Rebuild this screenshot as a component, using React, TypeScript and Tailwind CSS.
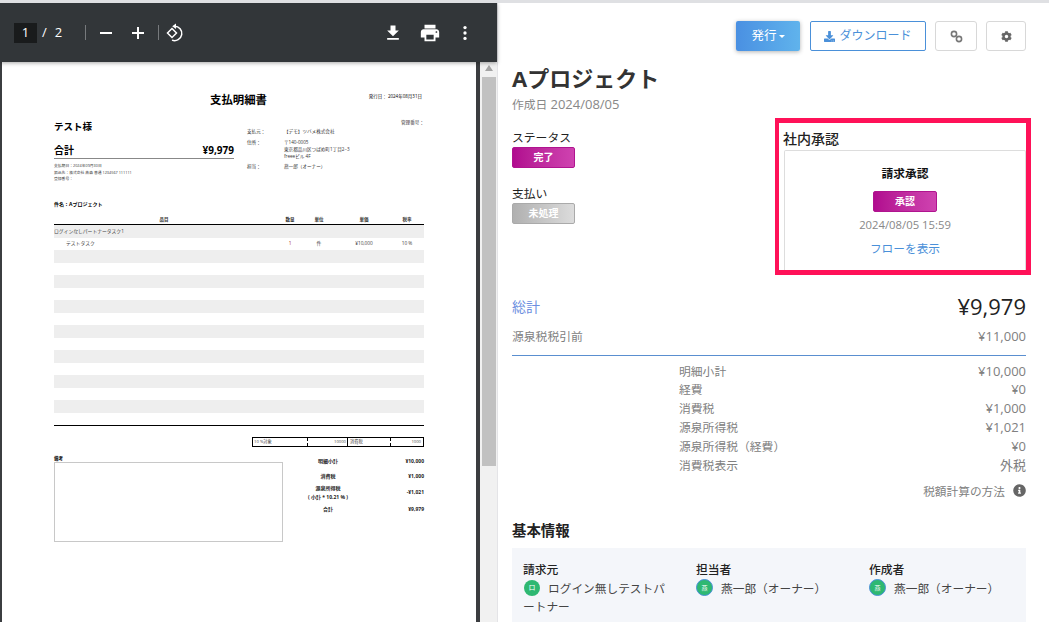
import React from "react";
import { FaCog, FaDownload, FaInfoCircle } from "react-icons/fa";

const stripes = [true, false, true, false, true, false, true, false, true, false, true, false, true];

function Money({ label, value }: { label: string; value: string }) {
  return (
    <div className="flex h-[18.8px] items-center justify-between pl-[167px] text-[11.8px] text-[#808080]">
      <span>{label}</span>
      <span className="text-[13px]">{value}</span>
    </div>
  );
}

function Person({ title, name }: { title: string; name: string }) {
  return (
    <div className="w-[173px] shrink-0">
      <div className="text-[11.8px] leading-[18px] font-medium text-[#222]">{title}</div>
      <div className="mt-[1px] flex items-center gap-[8px] text-[11.7px] leading-[18px] text-[#444]">
        <span className="flex h-[17px] w-[17px] shrink-0 items-center justify-center rounded-full border border-[#4a90d9] bg-[#2eb872] text-[6px] text-white">燕</span>
        <span>{name}</span>
      </div>
    </div>
  );
}

export default function App() {
  return (
    <div
      className="flex h-[622px] w-[1049px] overflow-hidden border-t-[3px] border-[#dfe0e3] bg-white"
      style={{ fontFamily: '"Open Sans", "Noto Sans CJK JP", sans-serif' }}
    >
      <div className="flex w-[497px] shrink-0 flex-col bg-[#3b3d40]">
        <div className="z-10 flex h-[59px] shrink-0 items-center bg-[#323639] pl-[14px] pr-[22px] text-white shadow-[0_1px_4px_rgba(0,0,0,0.35)]">
          <span className="flex h-[20px] w-[23px] items-center justify-center bg-[#191b1c] text-[13px]">1</span>
          <span className="ml-[5px] text-[13px]">/</span>
          <span className="ml-[8px] text-[13px]">2</span>
          <span className="ml-[23px] h-[15px] w-px bg-[#777a7d]" />
          <svg className="ml-[14px] h-[12px] w-[12px]" viewBox="0 0 12 12" fill="white"><rect y="5" width="12" height="2" /></svg>
          <svg className="ml-[20px] h-[12px] w-[12px]" viewBox="0 0 12 12" fill="white"><path d="M5 0h2v5h5v2H7v5H5V7H0V5h5z" /></svg>
          <span className="ml-[14px] h-[15px] w-px bg-[#777a7d]" />
          <svg className="ml-[6px] h-[20px] w-[20px]" viewBox="0 0 20 20" fill="none" stroke="white" strokeWidth="1.5">
            <path d="M9.5 3.2a7.2 7.2 0 1 1-2.5 13.9" />
            <path d="M11 .4 7.2 3.2 11 6z" fill="white" stroke="none" />
            <path d="M7 5.5 11.5 10 7 14.5 2.5 10z" />
          </svg>
          <svg className="ml-auto h-[20px] w-[20px]" viewBox="0 0 24 24" fill="white"><path d="M19 9h-4V3H9v6H5l7 7 7-7zM5 18v2h14v-2H5z" /></svg>
          <svg className="ml-[16px] h-[22px] w-[22px]" viewBox="0 0 24 24" fill="white"><path d="M19 8H5c-1.66 0-3 1.34-3 3v6h4v4h12v-4h4v-6c0-1.66-1.34-3-3-3zm-3 11H8v-5h8v5zm3-7c-.55 0-1-.45-1-1s.45-1 1-1 1 .45 1 1-.45 1-1 1zm-1-9H6v4h12V3z" /></svg>
          <svg className="ml-[14px] h-[20px] w-[20px]" viewBox="0 0 24 24" fill="white"><circle cx="12" cy="5.5" r="2" /><circle cx="12" cy="12" r="2" /><circle cx="12" cy="18.5" r="2" /></svg>
        </div>
        <div className="flex min-h-0 flex-1">
          <div className="ml-[2px] w-[474px] shrink-0 bg-white pl-[52px] pr-[52px] text-black">
            <div className="relative h-[38px]">
              <div className="absolute left-[156px] top-[30px] text-[11.4px] leading-[15px] font-bold">支払明細書</div>
              <div className="absolute right-[2px] top-[31px] text-[4.5px] leading-[7px]">発行日： 2024年08月31日</div>
            </div>
            <div className="flex h-[100px]">
              <div className="w-[180px] pt-[20px]">
                <div className="text-[9.5px] leading-[13px] font-bold">テスト様</div>
                <div className="mt-[10px] flex items-center justify-between border-b border-[#888] pb-[1px] text-[10px] leading-[14px] font-bold">
                  <span>合計</span>
                  <span>¥9,979</span>
                </div>
                <div className="mt-[4px] text-[3.8px] leading-[6.5px] text-[#333]">
                  <div>支払期日：2024年09月30日</div>
                  <div>振込先：株式会社 燕森 普通 1234567 111111</div>
                  <div>登録番号：</div>
                </div>
              </div>
              <div className="relative ml-[13px] flex-1 pt-[28px] text-[4.6px] leading-[7px] text-[#333]">
                <div className="absolute right-0 top-[19px]">管理番号：</div>
                <div className="flex h-[11px]"><span className="w-[37px]">支払元：</span><span>【デモ】ツバメ株式会社</span></div>
                <div className="flex h-[24px]"><span className="w-[37px]">住所：</span><span>〒140-0005<br />東京都品川区つばめ町1丁目2−3<br />freeeビル 4F</span></div>
                <div className="flex"><span className="w-[37px]">担当：</span><span>燕一郎（オーナー）</span></div>
              </div>
            </div>
            <div className="text-[5px] leading-[8px] font-bold">件名：Aプロジェクト</div>
            <div className="mt-[7px] flex h-[10px] items-center border-b border-black text-[4.5px] font-bold leading-[7px] text-[#333]">
              <span className="w-[220px] text-center">品目</span>
              <span className="w-[32px] text-center">数量</span>
              <span className="w-[26px] text-center">単位</span>
              <span className="w-[64px] text-center">単価</span>
              <span className="w-[22px] text-center">税率</span>
            </div>
            <div className="flex h-[12.5px] items-center bg-[#eeeeee] text-[4.8px] text-[#444]">ログインなしパートナータスク1</div>
            <div className="flex h-[12.5px] items-center text-[4.8px] text-[#444]">
              <span className="w-[220px] pl-[12px]">テストタスク</span>
              <span className="w-[32px] text-center text-[#a33]">1</span>
              <span className="w-[26px] text-center">件</span>
              <span className="w-[64px] text-center">¥10,000</span>
              <span className="w-[22px] text-center">10 %</span>
            </div>
            {stripes.map((on, i) => (
              <div key={i} className={on ? "h-[12.5px] bg-[#eeeeee]" : "h-[12.5px]"} />
            ))}
            <div className="mt-[12.5px] border-t border-black" />
            <div className="ml-[198px] mt-[11px] flex h-[10px] border border-black text-[4.2px] text-[#444]">
              <span className="flex w-[55px] items-center border-r border-dashed border-black pl-[1px]">10 %対象</span>
              <span className="flex w-[40px] items-center justify-end border-r border-black pr-[1px]">10000</span>
              <span className="flex w-[43px] items-center border-r border-dashed border-black pl-[2px]">消費税</span>
              <span className="flex flex-1 items-center justify-end pr-[2px]">1000</span>
            </div>
            <div className="mt-[8px] flex">
              <div className="w-[229px]">
                <div className="text-[4.5px] font-bold leading-[7px]">備考</div>
                <div className="h-[80px] border border-[#c8c8c8]" />
              </div>
              <div className="-mt-[1px] ml-[20px] flex-1 text-[5px] font-bold leading-[9px] text-[#222]">
                <div className="flex h-[15px] items-center justify-between"><span className="w-[50px] text-center">明細小計</span><span>¥10,000</span></div>
                <div className="flex h-[15px] items-center justify-between"><span className="w-[50px] text-center">消費税</span><span>¥1,000</span></div>
                <div className="flex h-[17px] items-center justify-between"><span className="w-[50px] text-center">源泉所得税<br />( 小計 * 10.21 % )</span><span>-¥1,021</span></div>
                <div className="flex h-[16px] items-center justify-between"><span className="w-[50px] text-center">合計</span><span>¥9,979</span></div>
              </div>
            </div>
          </div>
          <div className="ml-[4px] flex w-[17px] flex-col items-center bg-[#f1f1f1] pt-[3px]">
            <svg className="h-[6px] w-[8px]" viewBox="0 0 8 6" fill="#a3a3a3"><path d="M4 0l4 6H0z" /></svg>
            <div className="mt-[6px] h-[389px] w-[14px] bg-[#c1c1c1]" />
          </div>
        </div>
      </div>
      <div className="min-w-0 flex-1 border-l border-[#e4e4e7] pl-[14px] pr-[23px] text-[#333]">
        <div className="mt-[18px] flex justify-end gap-[9px]">
          <button className="flex h-[30px] w-[64px] items-center justify-center gap-[2px] rounded-[2px] bg-gradient-to-r from-[#4a90e2] to-[#60b3ec] text-[12.5px] text-white shadow-[0_1px_4px_rgba(0,0,0,0.3)]">
            発行<span className="mt-[1px] border-x-[3px] border-t-[3px] border-x-transparent border-t-white" />
          </button>
          <button className="ml-[1px] flex h-[30px] w-[116px] items-center justify-center gap-[4px] rounded-[2px] border border-[#4a90d9] text-[12px] text-[#4a90d9]">
            <FaDownload className="h-[11px] w-[11px]" />ダウンロード
          </button>
          <button className="flex h-[30px] w-[42px] items-center justify-center rounded-[3px] border border-[#d8d8d8]">
            <svg className="h-[13px] w-[13px]" viewBox="0 0 13 13" fill="none" stroke="#777" strokeWidth="1.6">
              <circle cx="4" cy="4" r="2.6" />
              <circle cx="9" cy="9" r="2.6" />
            </svg>
          </button>
          <button className="flex h-[30px] w-[40px] items-center justify-center rounded-[3px] border border-[#d8d8d8] text-[#666]"><FaCog className="h-[11px] w-[11px]" /></button>
        </div>
        <h1 className="mt-[12px] text-[22px] leading-[30px] font-bold text-[#333]">Aプロジェクト</h1>
        <div className="mt-[2px] text-[11.8px] leading-[18px] text-[#888]">作成日 <span className="text-[13px]">2024/08/05</span></div>
        <div className="mt-[5px] flex h-[157px] justify-between">
          <div className="pt-[11px]">
            <div className="text-[11.8px] leading-[17px] text-[#222]">ステータス</div>
            <div className="mt-[1px] flex h-[21px] w-[63px] items-center justify-center rounded-[2px] border border-[#b0148f] bg-gradient-to-r from-[#b10a8f] to-[#cf42b0] pb-[1px] text-[10px] font-bold text-white">完了</div>
            <div className="mt-[17px] text-[11.8px] leading-[17px] text-[#222]">支払い</div>
            <div className="mt-[1px] flex h-[21px] w-[63px] items-center justify-center rounded-[2px] border border-[#aaa] bg-gradient-to-r from-[#b0b0b0] to-[#dcdcdc] pb-[1px] text-[10px] font-bold text-white">未処理</div>
          </div>
          <div className="-mr-[5px] w-[256px] border-y-[5px] border-l-[4px] border-r-[5px] border-[#ff1158] pl-[5px] pt-[6px]">
            <div className="-ml-[1px] text-[14px] leading-[20px] font-medium text-[#222]">社内承認</div>
            <div className="mt-[1px] flex h-[120px] flex-col items-center rounded-t-[2px] border-x border-t border-[#dddddd] pt-[13px]">
              <div className="text-[11.8px] leading-[18px] font-bold text-[#111]">請求承認</div>
              <div className="mt-[9px] flex h-[21px] w-[64px] items-center justify-center rounded-[2px] border border-[#b0148f] bg-gradient-to-r from-[#b10a8f] to-[#cf42b0] pb-[1px] text-[10px] font-bold text-white">承認</div>
              <div className="mt-[5px] text-[11.3px] leading-[16px] text-[#888]">2024/08/05 15:59</div>
              <div className="mt-[6px] text-[11.7px] leading-[18px] text-[#4a90d9]">フローを表示</div>
            </div>
          </div>
        </div>
        <div className="mt-[16px] flex items-center justify-between">
          <span className="text-[14px] text-[#6d8fe0]">総計</span>
          <span className="text-[22px] leading-[30px] text-[#222]">¥9,979</span>
        </div>
        <div className="mt-[6px] flex items-center justify-between text-[11.8px] leading-[18px] text-[#808080]">
          <span>源泉税税引前</span>
          <span className="text-[13px]">¥11,000</span>
        </div>
        <div className="mb-[6px] mt-[10px] border-t border-[#5a8fd0]" />
        <Money label="明細小計" value="¥10,000" />
        <Money label="経費" value="¥0" />
        <Money label="消費税" value="¥1,000" />
        <Money label="源泉所得税" value="¥1,021" />
        <Money label="源泉所得税（経費）" value="¥0" />
        <Money label="消費税表示" value="外税" />
        <div className="mt-[7px] flex items-center justify-end gap-[8px] text-[11.7px] leading-[18px] text-[#808080]">
          税額計算の方法<FaInfoCircle className="h-[13px] w-[13px] text-[#666]" />
        </div>
        <div className="mt-[21px] text-[14.4px] leading-[20px] font-bold text-[#222]">基本情報</div>
        <div className="mt-[7px] flex h-[80px] bg-[#f4f6fa] pl-[11px] pt-[12px]">
          <div className="w-[173px] shrink-0 pr-[25px]">
            <div className="text-[11.8px] leading-[18px] font-medium text-[#222]">請求元</div>
            <div className="mt-[1px] text-[11.7px] leading-[18px] text-[#444] [line-break:anywhere]">
              <span className="ml-[1px] mr-[8px] mt-[1px] inline-flex h-[16px] w-[16px] items-center justify-center rounded-full bg-[#2eb872] align-top text-[7px] text-white">ロ</span>ログイン無しテストパートナー
            </div>
          </div>
          <Person title="担当者" name="燕一郎（オーナー）" />
          <Person title="作成者" name="燕一郎（オーナー）" />
        </div>
      </div>
    </div>
  );
}
